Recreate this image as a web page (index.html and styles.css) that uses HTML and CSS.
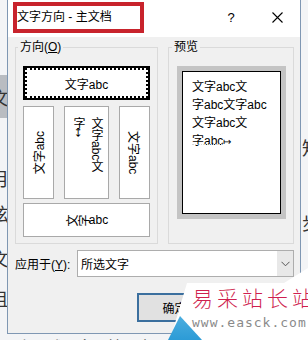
FILE: index.html
```html
<!DOCTYPE html>
<html lang="zh-CN">
<head>
    <meta charset="UTF-8">
    <title>文字方向 - 主文档</title>
    <link rel="stylesheet" href="styles.css">
</head>
<body>
    <!-- documento detrás del diálogo -->
    <div class="doc-left">
        <div class="band"><span class="doc-char">文</span></div>
        <span class="doc-char m1">、</span>
        <span class="doc-char m2">月</span>
        <span class="doc-char m3">泫</span>
        <span class="doc-char m4">文</span>
        <span class="doc-char m5">且</span>
    </div>

    <div class="dialog">
        <div class="titlebar">
            <div class="title-box">文字方向 - 主文档</div>
            <div class="title-btn help">?</div>
            <div class="title-btn close">
                <svg width="11" height="11" viewBox="0 0 11 11"><path d="M0.5 0.5L10.5 10.5M10.5 0.5L0.5 10.5" stroke="#000" stroke-width="1.1" fill="none"/></svg>
            </div>
        </div>

        <div class="dialog-body">
            <div class="groups">
                <fieldset class="group orient">
                    <legend>方向(<u>O</u>)</legend>
                    <div class="opt opt-h selected">文字abc</div>
                    <div class="opt-row">
                        <div class="opt opt-v up"><span class="sideways">文字abc</span></div>
                        <div class="opt opt-v stack"><span class="upright">文字abc文<br>字<span class="para">↦</span></span></div>
                        <div class="opt opt-v down"><span class="sideways">文字abc</span></div>
                    </div>
                    <div class="opt opt-h"><span class="rot">文</span><span class="rot">字</span>abc</div>
                </fieldset>

                <fieldset class="group preview">
                    <legend>预览</legend>
                    <div class="preview-frame">
                        <div class="preview-page">
                            文字abc文<br>
                            字abc文字abc<br>
                            文字abc文<br>
                            字abc<span class="para">↦</span><br>
                            <span class="dots"></span>
                        </div>
                    </div>
                </fieldset>
            </div>

            <div class="apply-row">
                <label class="apply-label">应用于(<u>Y</u>):</label>
                <div class="select">
                    <span class="select-value">所选文字</span>
                    <span class="select-arrow">
                        <svg width="9" height="6" viewBox="0 0 9 6"><path d="M0.5 0.8L4.5 4.8L8.5 0.8" stroke="#555" stroke-width="1" fill="none"/></svg>
                    </span>
                </div>
            </div>

            <div class="btn-row">
                <div class="btn default">确定</div>
                <div class="btn">取消</div>
            </div>
        </div>
    </div>

    <div class="doc-right">
        <span class="doc-char r1">知</span>
        <span class="doc-char r2">步</span>
    </div>

    <div class="doc-bottom">上述文档内容的排列</div>

    <!-- marca de agua -->
    <div class="watermark">
        <div class="wm-title">易采站长站</div>
        <div class="wm-url">www.easck.com</div>
    </div>
</body>
</html>
```

FILE: styles.css
```css
/* === BASE === */
* {
    box-sizing: border-box;
}

body {
    margin: 0;
    width: 308px;
    height: 340px;
    overflow: hidden;
    position: relative;
    background: #f3f4f6;
    font-family: "Liberation Sans", "Noto Sans CJK SC", sans-serif;
    font-size: 12px;
    color: #000;
    display: grid;
    grid-template-columns: 7px 294px 1fr;
    grid-template-rows: 334px 1fr;
}

/* === DOCUMENTO DE FONDO === */
.doc-left {
    grid-column: 1;
    grid-row: 1 / 3;
    overflow: hidden;
    display: flex;
    flex-direction: column;
    padding-top: 75px;
}

.doc-char {
    display: block;
    font-family: "Noto Sans CJK SC", sans-serif;
    font-size: 18px;
    line-height: 20px;
    height: 20px;
    color: #333;
    white-space: nowrap;
}

.doc-left .doc-char {
    margin-left: -9px;
}

.band {
    height: 43px;
    background: #b9bcc1;
    padding-top: 12px;
}

.doc-left .m1 { margin-top: 20px; }
.doc-left .m2 { margin-top: 10px; }
.doc-left .m3 { margin-top: 15px; }
.doc-left .m4 { margin-top: 25px; }
.doc-left .m5 { margin-top: 20px; }

.doc-right {
    grid-column: 3;
    grid-row: 1 / 3;
    overflow: hidden;
    padding-top: 137px;
}

.doc-right .doc-char {
    margin-left: 1px;
}

.doc-right .r2 { margin-top: 55px; }

.doc-bottom {
    grid-column: 2;
    grid-row: 2;
    overflow: hidden;
    padding: 3px 0 0 10px;
    font-family: "Noto Sans CJK SC", sans-serif;
    font-size: 16px;
    line-height: 18px;
    letter-spacing: 14px;
    color: #444;
    white-space: nowrap;
}

/* === DIÁLOGO === */
.dialog {
    grid-column: 2;
    grid-row: 1;
    background: #f0f0f0;
    border: 1px solid #7f97b3;
    border-top: 0;
    display: flex;
    flex-direction: column;
}

.titlebar {
    height: 37px;
    background: #fff;
    display: flex;
    align-items: flex-start;
    padding: 2px 0 0 5px;
}

/* recuadro rojo de anotación */
.title-box {
    width: 131px;
    height: 31px;
    border: 4px solid #c8232c;
    line-height: 23px;
    white-space: nowrap;
}

.title-btn {
    width: 46px;
    height: 30px;
    display: flex;
    align-items: center;
    justify-content: center;
    font-size: 13px;
}

.help {
    margin-left: auto;
}

.dialog-body {
    flex: 1;
    padding: 2px 6px 0 7px;
    display: flex;
    flex-direction: column;
}

.groups {
    display: grid;
    grid-template-columns: 143px 1fr;
    gap: 10px;
}

.group {
    margin: 0;
    min-width: 0;
    border: 1px solid #dadada;
    padding: 11px 7px 6px 7px;
}

.group legend {
    padding: 0 2px;
    margin-left: -5px;
    line-height: 16px;
    font-size: 12px;
}

.preview {
    padding-left: 8px;
}

/* === OPCIONES DE DIRECCIÓN === */
.opt {
    background: #fff;
    border: 1px solid #a9a9a9;
    display: flex;
    align-items: center;
    justify-content: center;
}

.opt-h {
    height: 34px;
}

.opt-h.selected {
    border: 2px solid #000;
    outline: 2px dotted #000;
    outline-offset: -4px;
}

.opt-row {
    display: flex;
    justify-content: space-between;
    margin: 6px 0 4px;
}

.opt-v {
    height: 93px;
    width: 31px;
}

.opt-v.stack {
    width: 45px;
    align-items: flex-start;
    padding-top: 10px;
}

.sideways {
    writing-mode: vertical-rl;
    text-orientation: sideways;
}

.up .sideways {
    transform: rotate(180deg);
}

.upright {
    writing-mode: vertical-rl;
    line-height: 17px;
}

.rot {
    display: inline-block;
    transform: rotate(-90deg);
}

.para {
    font-family: "DejaVu Sans", sans-serif;
    font-size: 10px;
}

/* === VISTA PREVIA === */
.preview-frame {
    height: 153px;
    background: #c4c4c4;
    padding: 5px;
}

.preview-page {
    height: 100%;
    background: #fff;
    border: 1px solid #000;
    padding: 6px 0 0 9px;
    line-height: 18px;
    white-space: nowrap;
}

.dots {
    display: inline-block;
    width: 30px;
    vertical-align: top;
    margin-top: -7px;
    border-bottom: 1px dotted #d8d8d8;
}

/* === APLICAR A === */
.apply-row {
    display: flex;
    align-items: center;
    margin-top: 6px;
}

.apply-label {
    width: 62px;
    flex-shrink: 0;
}

.select {
    flex: 1;
    height: 27px;
    background: #fff;
    border: 1px solid #adadad;
    display: flex;
    align-items: center;
}

.select-value {
    flex: 1;
    padding-left: 3px;
}

.select-arrow {
    width: 16px;
    height: 100%;
    background: #e8e8e8;
    display: flex;
    align-items: center;
    justify-content: center;
}

/* === BOTONES === */
.btn-row {
    display: flex;
    justify-content: flex-end;
    gap: 7px;
    margin-top: 16px;
}

.btn {
    width: 75px;
    height: 29px;
    background: #e1e1e1;
    border: 1px solid #adadad;
    display: flex;
    align-items: center;
    justify-content: center;
}

.btn.default {
    border: 2px solid #3b6f9e;
}

/* === MARCA DE AGUA === */
.watermark {
    position: absolute;
    left: 168px;
    top: 266px;
    width: 140px;
    height: 74px;
    padding: 20px 0 0 24px;
    overflow: hidden;
}

.watermark::before {
    content: "";
    position: absolute;
    inset: 0;
    background: #fff;
    clip-path: polygon(19px 17px, 116px 17px, 140px 2px, 140px 74px, 2px 74px);
}

.watermark::after {
    content: "";
    position: absolute;
    inset: 0;
    background: linear-gradient(180deg, #8fd6f2, #2c9bd6);
    clip-path: polygon(0 74px, 12px 50px, 34px 74px);
}

.wm-title {
    position: relative;
    z-index: 1;
    font-family: "Noto Sans CJK SC", sans-serif;
    font-weight: 300;
    font-size: 21px;
    line-height: 22px;
    letter-spacing: 4px;
    color: #cf1f4f;
    white-space: nowrap;
}

.wm-url {
    position: relative;
    z-index: 1;
    margin-top: 7px;
    font-family: "DejaVu Sans Mono", monospace;
    font-size: 13px;
    line-height: 16px;
    letter-spacing: 1px;
    color: #8a8a8a;
    white-space: nowrap;
}
```
